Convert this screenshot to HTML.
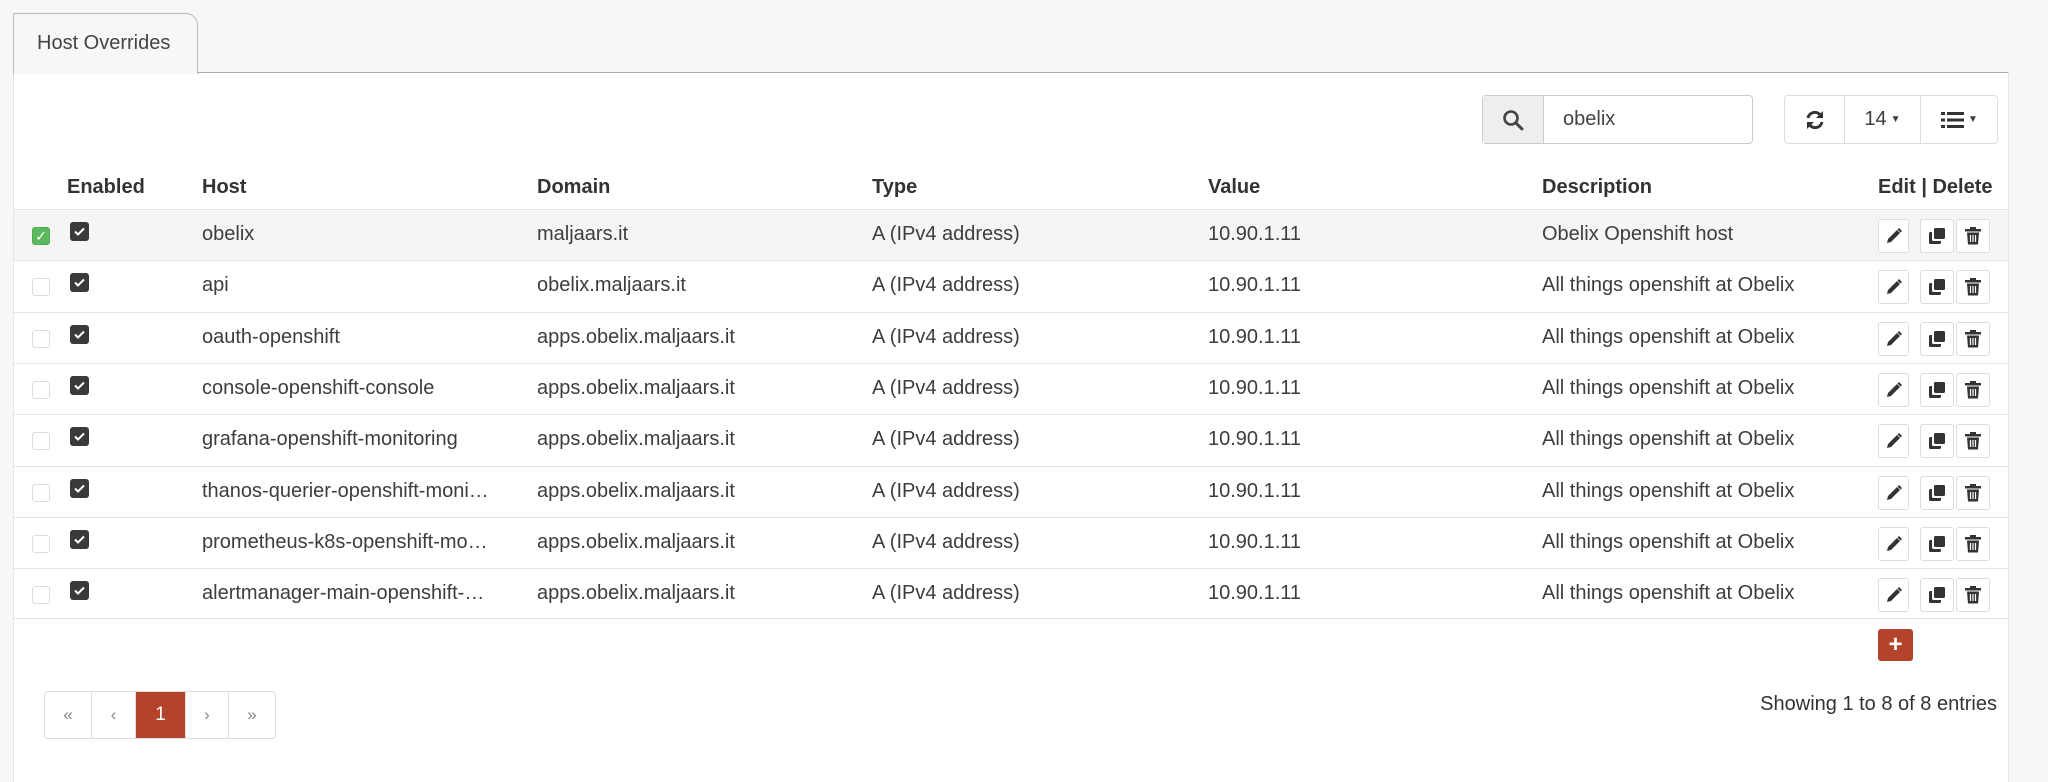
<!DOCTYPE html>
<html><head><meta charset="utf-8"><style>
*{box-sizing:border-box;margin:0;padding:0}
body{width:2048px;height:776px;background:#f7f7f7;font-family:"Liberation Sans",sans-serif;color:#3d3d3d;font-size:20px;position:relative;overflow:hidden}
.tab{position:absolute;left:13px;top:13px;width:185px;height:61px;background:#f7f7f7;border:1px solid #bbb;border-bottom:none;border-radius:0 12px 0 0;font-size:20px;padding:18px 0 0 23px;color:#444;z-index:2}
.panel{position:absolute;left:13px;top:72px;width:1996px;height:710px;background:#fff;border-top:1px solid #aaa;border-left:1px solid #e6e6e6;border-right:1px solid #e6e6e6}
.abs{position:absolute}
.search{left:1482px;top:95px;width:271px;height:49px;border:1px solid #ccc;border-radius:4px;background:#fff}
.search .add{position:absolute;left:0;top:0;width:61px;height:47px;background:#eee;border-right:1px solid #ccc}
.bg{left:1784px;top:95px;width:214px;height:49px;border:1px solid #ddd;border-radius:4px;background:#fff}
.bg div{position:absolute;top:0;height:47px;border-right:1px solid #ddd;display:flex;align-items:center;justify-content:center}
.hdr{top:176px;font-weight:bold;color:#333}
.row{position:absolute;left:14px;width:1994px;height:51px;border-top:1px solid #e4e4e4}
.row span{position:absolute;top:13px;white-space:nowrap;overflow:hidden}
.cb{position:absolute;left:18px;top:17px;width:18px;height:18px;border:1px solid #ddd;border-radius:3px;background:#fff}
.cb2{position:absolute;left:56px;top:12px;width:19px;height:19px;border-radius:3px;background:#3a3a3a}
.act{position:absolute;top:9px;height:34px;border:1px solid #ddd;border-radius:3px;background:#fff;display:flex;align-items:center;justify-content:center}
.pg{left:44px;top:691px;height:48px;border:1px solid #ddd;border-radius:4px;display:flex;background:#fff}
.pg div{height:46px;display:flex;align-items:center;justify-content:center;border-right:1px solid #ddd;color:#888;font-size:17px}
</style></head><body>
<div class="tab">Host Overrides</div>
<div class="panel"></div>
<div class="abs search"><div class="add"><svg style="position:absolute;left:19px;top:13px" width="22" height="22" viewBox="0 0 22 22"><circle cx="9" cy="9" r="6.5" fill="none" stroke="#444" stroke-width="2.6"/><path d="M14 14l6 6" stroke="#444" stroke-width="3" stroke-linecap="round"/></svg></div><span style="position:absolute;left:80px;top:12px;color:#444">obelix</span></div>
<div class="abs bg">
<div style="left:0;width:60px"><svg width="22" height="22" viewBox="0 0 22 22"><path d="M4 9a7 7 0 0 1 13-2" fill="none" stroke="#333" stroke-width="3"/><path d="M19 2v7h-7z" fill="#333"/><path d="M18 13a7 7 0 0 1-13 2" fill="none" stroke="#333" stroke-width="3"/><path d="M3 20v-7h7z" fill="#333"/></svg></div>
<div style="left:60px;width:76px;font-size:20px">14<span style="font-size:10px;margin-left:4px">▼</span></div>
<div style="left:136px;width:77px;border:none"><svg width="24" height="18" viewBox="0 0 24 18"><rect x="0" y="1" width="4" height="3" fill="#333"/><rect x="0" y="7.5" width="4" height="3" fill="#333"/><rect x="0" y="14" width="4" height="3" fill="#333"/><rect x="6" y="1" width="17" height="3" fill="#333"/><rect x="6" y="7.5" width="17" height="3" fill="#333"/><rect x="6" y="14" width="17" height="3" fill="#333"/></svg><span style="font-size:10px;margin-left:3px">▼</span></div>
</div>
<div class="abs hdr" style="left:67px">Enabled</div>
<div class="abs hdr" style="left:202px">Host</div>
<div class="abs hdr" style="left:537px">Domain</div>
<div class="abs hdr" style="left:872px">Type</div>
<div class="abs hdr" style="left:1208px">Value</div>
<div class="abs hdr" style="left:1542px">Description</div>
<div class="abs hdr" style="left:1878px">Edit | Delete</div>
<div id="rows"></div>
<div class="row" style="top:618px;height:1px"></div>
<div class="abs" style="left:1878px;top:629px;width:35px;height:32px;background:#b3432a;border-radius:3px;color:#fff;font-weight:bold;font-size:24px;text-align:center;line-height:31px">+</div>
<div class="abs pg"><div style="width:47px">«</div><div style="width:44px">‹</div><div style="width:50px;background:#b3432a;color:#fff;font-size:19px">1</div><div style="width:43px">›</div><div style="width:46px;border:none">»</div></div>
<div class="abs" style="right:51px;top:693px;color:#333">Showing 1 to 8 of 8 entries</div>
<script>
var hosts=[["obelix","maljaars.it","Obelix Openshift host"],["api","obelix.maljaars.it"],["oauth-openshift","apps.obelix.maljaars.it"],["console-openshift-console","apps.obelix.maljaars.it"],["grafana-openshift-monitoring","apps.obelix.maljaars.it"],["thanos-querier-openshift-moni…","apps.obelix.maljaars.it"],["prometheus-k8s-openshift-mo…","apps.obelix.maljaars.it"],["alertmanager-main-openshift-…","apps.obelix.maljaars.it"]];
var pen='<svg width="18" height="18" viewBox="0 0 18 18"><path d="M2 16l1-4 9-9 3 3-9 9z" fill="#333"/><path d="M12.5 2.5l1.5-1.5 3 3-1.5 1.5z" fill="#333"/></svg>';
var cp='<svg width="18" height="18" viewBox="0 0 18 18"><rect x="6" y="1" width="11" height="11" rx="1.5" fill="#333"/><path d="M4 5H2.5A1.5 1.5 0 0 0 1 6.5v9A1.5 1.5 0 0 0 2.5 17h9a1.5 1.5 0 0 0 1.5-1.5V14H5.5A1.5 1.5 0 0 1 4 12.5z" fill="#333"/></svg>';
var tr='<svg width="16" height="18" viewBox="0 0 16 18"><rect x="0" y="2" width="16" height="2.5" fill="#333"/><rect x="5" y="0" width="6" height="2.5" fill="#333"/><path d="M2 5.5h12l-1 12H3z" fill="#333"/><path d="M5.5 8v7M8 8v7M10.5 8v7" stroke="#fff" stroke-width="1.2"/></svg>';
var h='';
hosts.forEach(function(r,i){
var top=209+i*51.3;
h+='<div class="row" style="top:'+top+'px;'+(i==0?'background:#f5f5f5':'')+'">'+
(i==0?'<div class="cb" style="background:#5cb85c;border-color:#4cae4c;color:#fff;font-size:14px;line-height:16px;text-align:center">✓</div>':'<div class="cb"></div>')+
'<div class="cb2"><svg width="19" height="19" viewBox="0 0 19 19"><path d="M5 9.5l3 3 6-6" fill="none" stroke="#fff" stroke-width="2"/></svg></div>'+
'<span style="left:188px;max-width:315px">'+r[0]+'</span><span style="left:523px">'+r[1]+'</span><span style="left:858px">A (IPv4 address)</span><span style="left:1194px">10.90.1.11</span><span style="left:1528px">'+(r[2]||'All things openshift at Obelix')+'</span>'+
'<div class="act" style="left:1864px;width:31px">'+pen+'</div><div class="act" style="left:1906px;width:34px">'+cp+'</div><div class="act" style="left:1942px;width:34px">'+tr+'</div></div>';});
document.getElementById('rows').innerHTML=h;
</script>
</body></html>
